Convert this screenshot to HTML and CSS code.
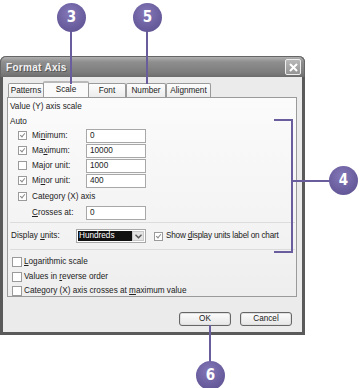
FILE: index.html
```html
<!doctype html>
<html>
<head>
<meta charset="utf-8">
<title>Format Axis</title>
<link rel="stylesheet" href="styles.css">
</head>
<body>
<div class="page">
	<div class="dialog">
		<div class="titlebar">
			<span class="title">Format Axis</span>
			<span class="close">
				<svg width="9" height="9" viewBox="0 0 9 9"><path d="M1 1L8 8M8 1L1 8" stroke="#fff" stroke-width="2"/></svg>
			</span>
		</div>
		<div class="body">
			<ul class="tabs">
				<li class="tab t-patterns">Patterns</li>
				<li class="tab t-scale cur">Scale</li>
				<li class="tab t-font">Font</li>
				<li class="tab t-number">Number</li>
				<li class="tab t-align">Alignment</li>
			</ul>
			<div class="panel">
				<div class="line">Value (Y) axis scale</div>
				<div class="line auto">Auto</div>
				<div class="row">
					<label><span class="chk on"></span><span>Mi<u>n</u>imum:</span></label>
					<span class="input">0</span>
				</div>
				<div class="row">
					<label><span class="chk on"></span><span>Ma<u>x</u>imum:</span></label>
					<span class="input">10000</span>
				</div>
				<div class="row">
					<label><span class="chk"></span><span>Ma<u>j</u>or unit:</span></label>
					<span class="input">1000</span>
				</div>
				<div class="row">
					<label><span class="chk on"></span><span>Mi<u>n</u>or unit:</span></label>
					<span class="input">400</span>
				</div>
				<div class="row cat">
					<label class="wide"><span class="chk on"></span><span>Category (X) axis</span></label>
				</div>
				<div class="row crosses">
					<label><span><u>C</u>rosses at:</span></label>
					<span class="input">0</span>
				</div>
				<div class="units">
					<span class="units-label">Display <u>u</u>nits:</span>
					<span class="select">
						<span class="sel-text">Hundreds</span>
						<span class="sel-btn">
							<svg width="7" height="5" viewBox="0 0 7 5"><path d="M0.5 0.8L3.5 3.8L6.5 0.8" fill="none" stroke="#555" stroke-width="1.4"/></svg>
						</span>
					</span>
					<label class="show"><span class="chk on"></span><span>Show <u>d</u>isplay units label on chart</span></label>
				</div>
				<div class="opts">
					<label><span class="chk"></span><span><u>L</u>ogarithmic scale</span></label>
					<label><span class="chk"></span><span>Values in <u>r</u>everse order</span></label>
					<label><span class="chk"></span><span>Category (X) axis crosses at <u>m</u>aximum value</span></label>
				</div>
			</div>
			<div class="buttons">
				<span class="btn">OK</span>
				<span class="btn">Cancel</span>
			</div>
		</div>
	</div>

	<!-- callouts -->
	<div class="callout c3">3</div>
	<div class="callout c5">5</div>
	<div class="callout c4">4</div>
	<div class="callout c6">6</div>
	<div class="lead l3"></div>
	<div class="lead l5"></div>
	<div class="lead l6"></div>
	<div class="lead l4"></div>
	<div class="bracket"></div>
</div>
</body>
</html>
```
FILE: styles.css
```css
*{margin:0;padding:0;list-style:none;box-sizing:border-box;}
body{background:#fff;font:8.2px/12px "Liberation Sans",Arial,sans-serif;color:#222;}
u{text-decoration:underline;}
label{white-space:nowrap;}
.page{position:relative;width:359px;height:388px;padding-top:56px;}

.dialog{
	width:305px;
	height:279px;
	background:#ebebeb;
	border:3px solid #5a5a5a;
	border-top:none;
	border-radius:6px 6px 0 0;
	display:flex;
	flex-direction:column;
}
.titlebar{
	height:21px;
	margin:0 -3px;
	padding:0 3px 0 5px;
	border-radius:6px 6px 0 0;
	background:linear-gradient(#b0b0b0,#8e8e8e 25%,#7b7b7b 80%,#6c6c6c);
	border:1px solid #666;
	border-bottom:none;
	display:flex;
	align-items:center;
	justify-content:space-between;
}
.title{color:#f2f2f2;font:bold 10px "Liberation Sans",sans-serif;letter-spacing:0.3px;text-shadow:1px 1px 0 #555;}
.close{
	width:16px;height:16px;
	border:1px solid #eee;
	border-radius:2px;
	background:linear-gradient(#b8b8b8,#959595);
	display:flex;align-items:center;justify-content:center;
}

.body{flex:1;display:flex;flex-direction:column;padding:4px 4px 0 4px;}
.tabs{display:flex;height:16px;padding-left:1px;align-items:flex-end;}
.tab{
	height:14px;
	border:1px solid #9a9a9a;
	border-bottom:none;
	border-radius:2px 2px 0 0;
	background:linear-gradient(#fdfdfd,#ececec);
	text-align:center;
	line-height:13px;
}
.t-patterns{width:36px;}
.t-scale{width:46px;}
.t-font{width:38px;}
.t-number{width:40px;}
.t-align{width:45px;}
.tab.cur{height:16px;background:#fafafa;margin:0 -1px;border-top:2px solid #b9b9b9;position:relative;z-index:1;line-height:14px;}

.panel{
	height:200px;
	margin-right:1px;
	border:1px solid #9a9a9a;
	background:linear-gradient(#fbfbfb,#f4f4f4 60%,#eeeeee);
	padding:3px 0 0 2px;
}
.line{height:12px;}
.auto{margin-top:3px;}
.row{display:grid;grid-template-columns:68px 60px;height:15px;align-items:center;padding-left:8px;}
.row label{display:flex;align-items:center;}
.row.cat{height:17px;}
.row.crosses{height:15px;}
.crosses label{padding-left:14px;}
.wide{grid-column:1 / 3;}

.chk{
	display:inline-block;
	width:9px;height:9px;
	border:1px solid #9a9a9a;
	background:#fff;
	margin-right:5px;
	flex:none;
	position:relative;
}
.chk.on::after{
	content:"";
	position:absolute;
	left:2px;top:0px;
	width:2px;height:4px;
	border:solid #8a8a8a;
	border-width:0 1.5px 1.5px 0;
	transform:rotate(40deg);
}
.input{
	height:14px;
	border:1px solid #a8a8a8;
	background:#fff;
	padding-left:3px;
	line-height:12px;
}

.units{
	height:28px;
	margin-top:2px;
	margin-right:1px;
	border-top:1px solid #dcdcdc;
	border-bottom:1px solid #dcdcdc;
	display:flex;
	align-items:center;
	padding-left:1px;
}
.units-label{width:65px;}
.select{
	width:70px;height:14px;
	border:1px solid #a8a8a8;
	background:#fff;
	display:flex;
	padding:1px;
}
.sel-text{flex:1;background:#111;color:#fff;line-height:10px;padding-left:1px;}
.sel-btn{width:12px;background:#e4e4e4;border:1px solid #c8c8c8;display:flex;align-items:center;justify-content:center;}
.show{display:flex;align-items:center;margin-left:8px;letter-spacing:-0.2px;}
.show .chk{margin-right:3px;}

.opts{display:flex;flex-direction:column;padding:5px 0 0 2px;}
.opts label{display:flex;align-items:center;height:14.5px;}
.opts .chk{width:10px;height:10px;margin-right:2px;}

.buttons{display:flex;justify-content:flex-end;gap:9px;padding:15px 6px 0 0;}
.btn{
	width:52px;height:14px;
	border:1px solid #666;
	border-radius:3px;
	background:linear-gradient(#fdfdfd,#e6e6e6);
	box-shadow:inset 0 0 0 1px #e0e0e0;
	text-align:center;
	line-height:12px;
}

.callout{
	position:absolute;
	width:29px;height:29px;
	border-radius:50%;
	background:radial-gradient(circle at 45% 35%,#8478b8,#6a5d9e 60%,#5b4f8c);
	color:#fff;
	font:bold 15px/29px "DejaVu Sans Condensed","Liberation Sans Narrow",sans-serif;
	text-align:center;
	z-index:3;
}
.c3{left:57px;top:3px;}
.c5{left:133px;top:3px;}
.c4{left:329px;top:166px;}
.c6{left:196px;top:361px;}
.lead{position:absolute;background:#6a5d9e;z-index:2;}
.l3{left:70px;top:28px;width:2px;height:56px;}
.l5{left:146px;top:28px;width:2px;height:56px;}
.l6{left:209px;top:325px;width:2px;height:38px;}
.l4{left:291px;top:180px;width:40px;height:2px;}
.bracket{
	position:absolute;
	left:274px;top:119px;
	width:19px;height:134px;
	border:2px solid #6a5d9e;
	border-left:none;
	z-index:2;
}
```
